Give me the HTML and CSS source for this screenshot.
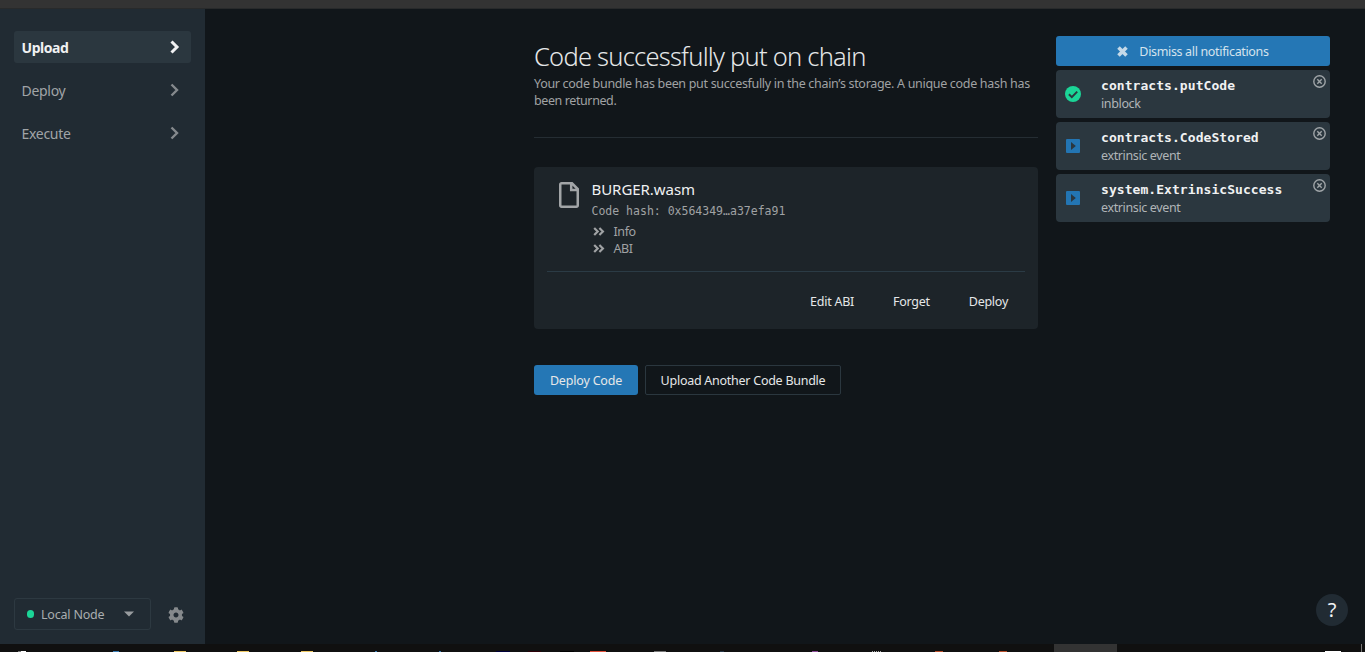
FILE: index.html
```html
<!DOCTYPE html>
<html lang="en">
<head>
<meta charset="utf-8">
<title>Contracts</title>
<link rel="stylesheet" href="styles.css">
</head>
<body>
<div class="browser-edge"></div>
<div class="app">
  <aside class="sidebar">
    <nav class="nav">
      <a class="nav-item active"><span>Upload</span><svg width="10" height="14" viewBox="0 0 10 14"><path d="M1.5 1.5 7 7 1.5 12.5"/></svg></a>
      <a class="nav-item"><span>Deploy</span><svg width="10" height="14" viewBox="0 0 10 14"><path d="M1.5 1.5 7 7 1.5 12.5"/></svg></a>
      <a class="nav-item"><span>Execute</span><svg width="10" height="14" viewBox="0 0 10 14"><path d="M1.5 1.5 7 7 1.5 12.5"/></svg></a>
    </nav>
    <div class="node-row">
      <div class="node-select"><i class="dot"></i><span class="node-name">Local Node</span><svg width="10" height="6" viewBox="0 0 10 6"><path d="M0 .5h10L5 5.5z" fill="#989c9f"/></svg></div>
      <svg class="gear" width="16" height="16" viewBox="0 0 512 512"><path fill="#85898c" d="M487.4 315.7l-42.6-24.6c4.3-23.2 4.3-47 0-70.2l42.6-24.6c4.9-2.8 7.1-8.6 5.5-14-11.1-35.6-30-67.8-54.7-94.6-3.8-4.1-10-5.1-14.8-2.3L380.8 110c-17.9-15.4-38.5-27.3-60.8-35.1V25.8c0-5.6-3.9-10.5-9.4-11.7-36.7-8.2-74.3-7.8-109.2 0-5.5 1.2-9.4 6.1-9.4 11.7V75c-22.2 7.9-42.8 19.8-60.8 35.1L88.7 85.5c-4.9-2.8-11-1.9-14.8 2.3-24.7 26.7-43.6 58.9-54.7 94.6-1.7 5.4.6 11.2 5.5 14L67.3 221c-4.3 23.2-4.3 47 0 70.2l-42.6 24.6c-4.9 2.8-7.1 8.6-5.5 14 11.1 35.6 30 67.8 54.7 94.6 3.8 4.1 10 5.1 14.8 2.3l42.6-24.6c17.9 15.4 38.5 27.3 60.8 35.1v49.2c0 5.6 3.9 10.5 9.4 11.7 36.7 8.2 74.3 7.8 109.2 0 5.5-1.2 9.4-6.1 9.4-11.7v-49.2c22.2-7.9 42.8-19.8 60.8-35.1l42.6 24.6c4.9 2.8 11 1.9 14.8-2.3 24.7-26.7 43.6-58.9 54.7-94.6 1.5-5.5-.7-11.3-5.6-14.1zM256 336c-44.1 0-80-35.9-80-80s35.9-80 80-80 80 35.9 80 80-35.9 80-80 80z"/></svg>
    </div>
  </aside>
  <main class="content">
    <h1><span>Code successfully put on chain</span></h1>
    <p class="intro"><span>Your code bundle has been put succesfully in the chain’s storage. A unique code hash has</span><br><span class="intro-end">been returned.</span></p>
    <div class="rule"></div>
    <section class="card">
      <div class="card-head">
        <svg class="file" width="20" height="26" viewBox="0 0 20 26"><path d="M2.5 1.25H13L18.75 7V23.5a1.25 1.25 0 0 1-1.25 1.25h-15a1.25 1.25 0 0 1-1.25-1.25v-21A1.25 1.25 0 0 1 2.5 1.25zM12.2 1.5V8h6.3" fill="none" stroke="#a2a5a7" stroke-width="2.5"/></svg>
        <div class="card-info">
          <div class="name"><span>BURGER.wasm</span></div>
          <div class="hash">Code hash: 0x564349…a37efa91</div>
          <div class="fold"><svg width="12" height="9" viewBox="0 0 12 9"><path d="M1.2 1 4.7 4.5 1.2 8M6.4 1 9.9 4.5 6.4 8"/></svg><span>Info</span></div>
          <div class="fold"><svg width="12" height="9" viewBox="0 0 12 9"><path d="M1.2 1 4.7 4.5 1.2 8M6.4 1 9.9 4.5 6.4 8"/></svg><span>ABI</span></div>
        </div>
      </div>
      <div class="card-actions"><a>Edit ABI</a><a>Forget</a><a>Deploy</a></div>
    </section>
    <div class="buttons"><button class="primary"><span>Deploy Code</span></button><button class="outline"><span>Upload Another Code Bundle</span></button></div>
  </main>
  <aside class="notices">
    <button class="dismiss"><svg width="11" height="11" viewBox="0 0 11 11"><path d="M1.5 1.5l8 8M9.5 1.5l-8 8" stroke="#c4d9e8" stroke-width="3.6"/></svg><span>Dismiss all notifications</span></button>
    <div class="notice">
      <svg width="16" height="16" viewBox="0 0 16 16"><circle cx="8" cy="8" r="8" fill="#1bd597"/><path d="M3.9 8.3 6.8 11.1 12.2 5.6" fill="none" stroke="#2b373f" stroke-width="2"/></svg>
      <div class="notice-text"><b>contracts.putCode</b><span>inblock</span></div>
      <svg class="close" width="13" height="13" viewBox="0 0 13 13"><circle cx="6.5" cy="6.5" r="5.7"/><path d="M4.3 4.3l4.4 4.4M8.7 4.3 4.3 8.7"/></svg>
    </div>
    <div class="notice">
      <svg width="16" height="16" viewBox="0 0 16 16"><rect x="1" y="1" width="14" height="14" rx="1" fill="#2375b3"/><path d="M6 4v8l4.8-4z" fill="#2b373f"/></svg>
      <div class="notice-text"><b>contracts.CodeStored</b><span>extrinsic event</span></div>
      <svg class="close" width="13" height="13" viewBox="0 0 13 13"><circle cx="6.5" cy="6.5" r="5.7"/><path d="M4.3 4.3l4.4 4.4M8.7 4.3 4.3 8.7"/></svg>
    </div>
    <div class="notice">
      <svg width="16" height="16" viewBox="0 0 16 16"><rect x="1" y="1" width="14" height="14" rx="1" fill="#2375b3"/><path d="M6 4v8l4.8-4z" fill="#2b373f"/></svg>
      <div class="notice-text"><b>system.ExtrinsicSuccess</b><span>extrinsic event</span></div>
      <svg class="close" width="13" height="13" viewBox="0 0 13 13"><circle cx="6.5" cy="6.5" r="5.7"/><path d="M4.3 4.3l4.4 4.4M8.7 4.3 4.3 8.7"/></svg>
    </div>
  </aside>
  <button class="help">?</button>
</div>
<svg class="taskbar" width="1365" height="8" viewBox="0 0 1365 8">
  <rect width="1365" height="8" fill="#101010"/>
  <rect x="1054" width="63" height="8" fill="#333"/>
  <path fill="#777" d="M18 7h3v1h-3zM654 7h12v1h-12zM1361 0h1v8h-1z"/>
  <path fill="#fff" d="M21 7h5v1h-5zM1325 7h16v1h-16z"/>
  <path fill="#3a7db5" d="M113 7h6v1h-6zM375 7h2v1h-2zM439 7h2v1h-2z"/>
  <path fill="#edc762" d="M174 7h12v1h-12zM237 7h12v1h-12zM301 7h12v1h-12z"/>
  <rect x="496" y="7" width="14" height="1" fill="#00003a"/>
  <rect x="528" y="7" width="13" height="1" fill="#2c0008"/>
  <rect x="560" y="7" width="14" height="1" fill="#000"/>
  <rect x="590" y="7" width="16" height="1" fill="#e4513a"/>
  <rect x="720" y="7" width="4" height="1" fill="#253444"/>
  <rect x="812" y="7" width="6" height="1" fill="#8d4d99"/>
  <path fill="#aaa" d="M872 7h1v1h-1zM874 7h1v1h-1zM876 7h1v1h-1zM878 7h1v1h-1zM880 7h1v1h-1z"/>
  <path fill="#b94f2b" d="M935 7h8v1h-8zM999 7h8v1h-8z"/>
</svg>
</body>
</html>
```
FILE: styles.css
```css
* { box-sizing: border-box; }
body { margin: 0; width: 1365px; height: 652px; overflow: hidden; display: flex; flex-direction: column; background: #11161a; color: #e5e7e8; font: 12.5px/17px "Noto Sans", "Open Sans", sans-serif; letter-spacing: -.26px; }
button { font: inherit; letter-spacing: inherit; color: inherit; border: 0; padding: 0; margin: 0; display: flex; align-items: center; justify-content: center; }
svg { display: block; flex: none; }
span, a { white-space: nowrap; }
.browser-edge { height: 9px; background: #333; border-bottom: 1px solid #282a2b; flex: none; }
.app { position: relative; flex: 1; display: flex; min-height: 0; }
.sidebar { width: 205px; background: #212b33; padding: 22px 14px 14px; display: flex; flex-direction: column; justify-content: space-between; }
.nav { display: flex; flex-direction: column; gap: 11px; }
.nav-item { width: 177px; height: 32px; border-radius: 3px; padding: 0 11px 0 7.5px; display: flex; align-items: center; justify-content: space-between; font-size: 14px; letter-spacing: -.3px; color: #a0a4a7; }
.nav-item.active { background: #2b373f; color: #f0f1f2; font-weight: 700; letter-spacing: -.45px; }
.nav-item svg { margin-top: -1px; fill: none; stroke: #85898d; stroke-width: 2.4; }
.nav-item.active svg { stroke: #f0f1f2; stroke-width: 3; }
.node-row { display: flex; align-items: center; gap: 17px; }
.gear { margin-top: 2px; }
.node-select { width: 137px; height: 32px; border: 1px solid #2d3941; border-radius: 3px; padding: 0 16px 0 12px; display: flex; align-items: center; color: #a9adaf; }
.node-select svg { margin-left: auto; }
.node-name { letter-spacing: -.2px; }
.dot { width: 7px; height: 8px; border-radius: 4px; background: #1bd597; margin-right: 7px; }
.content { width: 504px; margin-left: 329px; padding-top: 29px; }
h1 { margin: 0; font-size: 25.5px; line-height: 36px; font-weight: 300; letter-spacing: -.77px; color: #e5e7e8; }
.intro { margin: 1px 0 0; color: #a0a2a4; height: 34px; letter-spacing: -.31px; }
.intro-end { letter-spacing: -.4px; }
.rule { height: 1px; background: #252d33; margin-top: 28px; }
.card { margin-top: 29px; height: 162px; border-radius: 4px; background: #1d2429; padding: 13px; }
.card-head { height: 92px; border-bottom: 1px solid #2b3b45; display: flex; padding-left: 12px; }
.file { margin-top: 2px; }
.card-info { margin: -1px 0 0 12.5px; color: #a0a2a4; }
.name { font-size: 15px; line-height: 20px; color: #f0f1f2; letter-spacing: -.05px; }
.hash { font: 11.5px/17px "DejaVu Sans Mono", monospace; letter-spacing: 0; margin: 4px 0 3px; white-space: nowrap; }
.fold { display: flex; align-items: center; gap: 8.500px; padding-left: 1.500px; height: 17px; letter-spacing: -.4px; }
.fold svg { fill: none; stroke: #a0a2a4; stroke-width: 2.2; }
.card-actions { display: flex; justify-content: flex-end; gap: 39px; padding: 21px 17px 0 0; }
.buttons { display: flex; gap: 7px; margin-top: 36px; }
.primary { width: 104px; height: 30px; background: #2577b5; border-radius: 3px; letter-spacing: -.18px; }
.outline { width: 196px; height: 30px; background: transparent; border: 1px solid #2b373f; border-radius: 2px; }
.notices { width: 274px; margin-left: 18px; padding-top: 27px; display: flex; flex-direction: column; gap: 4px; }
.dismiss { height: 30px; background: #2577b5; border-radius: 3px; gap: 11px; color: #d5e3ed; letter-spacing: -.34px; }
.notice { height: 48px; background: #2b373f; border-radius: 4px; display: flex; align-items: center; padding-left: 9px; }
.notice-text { margin-left: 20px; padding-top: 2px; display: flex; flex-direction: column; line-height: 18px; letter-spacing: -.37px; color: #b0b5b8; }
.notice-text b { font: bold 13px/18px "DejaVu Sans Mono", monospace; letter-spacing: .06px; color: #f0f1f2; }
.close { margin: 5px 4px 0 auto; align-self: flex-start; fill: none; stroke: #a0a5a8; stroke-width: 1.4; }
.help { position: absolute; left: 1316px; top: 585px; width: 32px; height: 32px; padding-bottom: 1px; border-radius: 50%; background: #212b33; font-size: 20px; color: #f0f1f2; }
.taskbar { flex: none; }
```
